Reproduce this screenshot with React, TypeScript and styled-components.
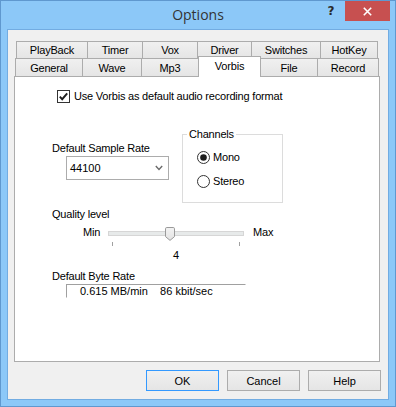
import React from "react";
import styled, { createGlobalStyle } from "styled-components";

const GlobalStyle = createGlobalStyle`
  html, body {
    margin: 0;
    padding: 0;
    width: 396px;
    height: 407px;
    overflow: hidden;
    background: #ffffff;
  }
  * { box-sizing: border-box; }
`;

const UI_FONT = `"Liberation Sans", Arial, sans-serif`;

const Frame = styled.div`
  width: 396px;
  height: 407px;
  border: 1px solid #5f98cf;
  background: #8cc8f8;
  display: flex;
  flex-direction: column;
`;

const TitleBar = styled.div`
  height: 28px;
  display: grid;
  grid-template-columns: 1fr auto 1fr;
  align-items: center;
`;

const TitleText = styled.div`
  grid-column: 2;
  font-family: "Open Sans", "Noto Sans", sans-serif;
  font-size: 14px;
  color: #333333;
  line-height: 28px;
`;

const TitleControls = styled.div`
  grid-column: 3;
  justify-self: end;
  align-self: start;
  display: flex;
  align-items: flex-start;
  margin-right: 5px;
`;

const HelpGlyph = styled.div`
  width: 26px;
  height: 20px;
  display: flex;
  align-items: center;
  justify-content: center;
  font-family: "DejaVu Sans", sans-serif;
  font-weight: bold;
  font-size: 12px;
  color: #2a2a2a;
  padding-right: 2px;
`;

const CloseButton = styled.div`
  width: 45px;
  height: 20px;
  background: #c75050;
  display: flex;
  align-items: center;
  justify-content: center;
`;

const Client = styled.div`
  flex: 1;
  margin: 0 6px 6px 6px;
  border: 1px solid #72ace2;
  background: #f0f0f0;
  display: flex;
  flex-direction: column;
  padding: 11px 8px 8px 6px;
  font-family: ${UI_FONT};
  font-size: 11px;
  color: #000000;
`;

const TabRow = styled.div<{ $offset: number; $h: number }>`
  display: flex;
  align-items: flex-end;
  height: ${(p) => p.$h}px;
  margin-left: ${(p) => p.$offset}px;
`;

const Tab = styled.div<{ $w: number; $h: number; $active?: boolean; $first?: boolean }>`
  width: ${(p) => p.$w}px;
  height: ${(p) => (p.$active ? 21 : p.$h)}px;
  margin-left: ${(p) => (p.$first ? 0 : -1)}px;
  margin-bottom: ${(p) => (p.$active ? -1 : 0)}px;
  border: 1px solid #acacac;
  border-bottom: none;
  background: ${(p) => (p.$active ? "#ffffff" : "linear-gradient(#f0f0f0, #e5e5e5)")};
  display: flex;
  align-items: center;
  justify-content: center;
  padding-bottom: ${(p) => (p.$active ? 3 : 0)}px;
  position: ${(p) => (p.$active ? "relative" : "static")};
  z-index: ${(p) => (p.$active ? 2 : "auto")};
  font-size: 11px;
  letter-spacing: -0.2px;
  white-space: nowrap;
`;

const Panel = styled.div`
  height: 286px;
  border: 1px solid #acacac;
  background: #ffffff;
  display: flex;
  flex-direction: column;
  letter-spacing: -0.2px;
`;

const CheckRow = styled.div`
  display: flex;
  align-items: center;
  gap: 4px;
  margin: 13px 0 0 42px;
  height: 13px;
  line-height: 13px;
`;

const MiddleRow = styled.div`
  display: flex;
  align-items: flex-start;
  margin: 25px 0 0 37px;
`;

const LeftColumn = styled.div`
  width: 130px;
  display: flex;
  flex-direction: column;
  padding-top: 14px;
`;

const Label = styled.div<{ $top?: number; $left?: number }>`
  line-height: 13px;
  height: 13px;
  margin-top: ${(p) => p.$top ?? 0}px;
  margin-left: ${(p) => p.$left ?? 0}px;
  white-space: nowrap;
`;

const Combo = styled.div`
  margin: 1px 0 0 14px;
  width: 103px;
  height: 24px;
  border: 1px solid #acacac;
  background: #ffffff;
  display: flex;
  align-items: center;
  justify-content: space-between;
  padding: 0 5px 0 3px;
  letter-spacing: 0;
`;

const GroupBox = styled.fieldset`
  width: 101px;
  height: 75px;
  margin: 0;
  padding: 0;
  border: 1px solid #dcdcdc;
  min-width: 0;
`;

const GroupLegend = styled.legend`
  margin-left: 4px;
  padding: 0 2px;
  line-height: 13px;
  font-size: 11px;
`;

const RadioList = styled.div`
  display: flex;
  flex-direction: column;
  gap: 11px;
  padding: 10px 0 0 14px;
`;

const OptionRow = styled.div`
  display: flex;
  align-items: center;
  gap: 3px;
  height: 13px;
  line-height: 13px;
`;

const SliderRow = styled.div`
  display: flex;
  align-items: flex-start;
  margin: 5px 0 0 68px;
`;

const EndLabel = styled.div<{ $w: number }>`
  width: ${(p) => p.$w}px;
  line-height: 13px;
  height: 13px;
`;

const SliderColumn = styled.div`
  width: 136px;
  margin: 1px 9px 0 0;
  display: flex;
  flex-direction: column;
`;

const TrackArea = styled.div`
  position: relative;
  height: 14px;
  padding-top: 4px;
`;

const Track = styled.div`
  height: 5px;
  border: 1px solid #d6d6d6;
  background: #e7eaea;
`;

const Thumb = styled.svg`
  position: absolute;
  top: 0;
`;

const TickRow = styled.div`
  display: flex;
  justify-content: space-between;
  padding: 0 4px;
  margin-top: 1px;
  height: 4px;
`;

const Tick = styled.div`
  width: 1px;
  height: 4px;
  background: #a0a0a0;
`;

const ValueLabel = styled.div`
  margin-top: 3px;
  text-align: center;
  line-height: 13px;
  height: 13px;
`;

const RateBox = styled.div`
  margin: 1px 0 0 51px;
  width: 180px;
  height: 14px;
  border-top: 1px solid #a0a0a0;
  border-left: 1px solid #a0a0a0;
  border-right: 1px solid #ffffff;
  border-bottom: 1px solid #ffffff;
  padding-left: 13px;
  line-height: 12px;
  white-space: pre;
  letter-spacing: 0;
`;

const ButtonRow = styled.div`
  display: flex;
  justify-content: flex-end;
  gap: 8px;
  margin: 8px -1px 0 0;
`;

const DialogButton = styled.div<{ $default?: boolean }>`
  width: 73px;
  height: 21px;
  border: 1px solid ${(p) => (p.$default ? "#3399ff" : "#acacac")};
  background: linear-gradient(#f0f0f0, #e5e5e5);
  display: flex;
  align-items: center;
  justify-content: center;
  font-size: 11px;
`;

const row1 = [
  { label: "PlayBack", x: 16 },
  { label: "Timer", x: 87 },
  { label: "Vox", x: 142 },
  { label: "Driver", x: 197 },
  { label: "Switches", x: 251 },
  { label: "HotKey", x: 320 },
];
const row1End = 377;

const row2 = [
  { label: "General", x: 15 },
  { label: "Wave", x: 82 },
  { label: "Mp3", x: 141 },
  { label: "Vorbis", x: 198 },
  { label: "File", x: 260 },
  { label: "Record", x: 317 },
];
const row2End = 378;

const ACTIVE_TAB = "Vorbis";

const quality = { value: 4, min: -1, max: 10 };
const TICK_START = 4;
const TICK_SPAN = 127;
const THUMB_W = 10;

function CheckBoxIcon() {
  return (
    <svg width="13" height="13" viewBox="0 0 13 13">
      <rect x="0.5" y="0.5" width="12" height="12" fill="#ffffff" stroke="#333333" />
      <path d="M2.8 6.6 L5.2 9.2 L10.2 3.4" fill="none" stroke="#1e1e1e" strokeWidth="1.9" />
    </svg>
  );
}

function RadioIcon({ checked }: { checked?: boolean }) {
  return (
    <svg width="13" height="13" viewBox="0 0 13 13">
      <circle cx="6.5" cy="6.5" r="6" fill="#ffffff" stroke="#333333" />
      {checked && <circle cx="6.5" cy="6.5" r="3.3" fill="#1e1e1e" />}
    </svg>
  );
}

function Chevron() {
  return (
    <svg width="8" height="6" viewBox="0 0 8 6">
      <path d="M0.8 1 L4 4.4 L7.2 1" fill="none" stroke="#6a6a6a" strokeWidth="1.4" />
    </svg>
  );
}

function renderRow(tabs: { label: string; x: number }[], end: number, h: number) {
  return tabs.map((t, i) => {
    const next = i + 1 < tabs.length ? tabs[i + 1].x : end;
    return (
      <Tab
        key={t.label}
        $w={next - t.x + 1}
        $h={h}
        $first={i === 0}
        $active={t.label === ACTIVE_TAB}
      >
        {t.label}
      </Tab>
    );
  });
}

export default function App() {
  const ratio = (quality.value - quality.min) / (quality.max - quality.min);
  const thumbLeft = TICK_START + ratio * TICK_SPAN - THUMB_W / 2;

  return (
    <>
      <GlobalStyle />
      <Frame>
        <TitleBar>
          <TitleText>Options</TitleText>
          <TitleControls>
            <HelpGlyph>?</HelpGlyph>
            <CloseButton>
              <svg width="9" height="9" viewBox="0 0 9 9">
                <path d="M0.8 0.8 L8.2 8.2 M8.2 0.8 L0.8 8.2" stroke="#ffffff" strokeWidth="1.6" />
              </svg>
            </CloseButton>
          </TitleControls>
        </TitleBar>
        <Client>
          <TabRow $offset={2} $h={17}>
            {renderRow(row1, row1End, 17)}
          </TabRow>
          <TabRow $offset={1} $h={18}>
            {renderRow(row2, row2End, 18)}
          </TabRow>
          <Panel>
            <CheckRow>
              <CheckBoxIcon />
              <span>Use Vorbis as default audio recording format</span>
            </CheckRow>
            <MiddleRow>
              <LeftColumn>
                <Label>Default Sample Rate</Label>
                <Combo>
                  <span>44100</span>
                  <Chevron />
                </Combo>
              </LeftColumn>
              <GroupBox>
                <GroupLegend>Channels</GroupLegend>
                <RadioList>
                  <OptionRow>
                    <RadioIcon checked />
                    <span>Mono</span>
                  </OptionRow>
                  <OptionRow>
                    <RadioIcon />
                    <span>Stereo</span>
                  </OptionRow>
                </RadioList>
              </GroupBox>
            </MiddleRow>
            <Label $top={5} $left={37}>Quality level</Label>
            <SliderRow>
              <EndLabel $w={25}>Min</EndLabel>
              <SliderColumn>
                <TrackArea>
                  <Track />
                  <Thumb
                    width="10"
                    height="14"
                    viewBox="0 0 10 14"
                    style={{ left: `${thumbLeft}px` }}
                  >
                    <defs>
                      <linearGradient id="thumbFill" x1="0" y1="0" x2="0" y2="1">
                        <stop offset="0" stopColor="#f3f3f3" />
                        <stop offset="1" stopColor="#e3e3e3" />
                      </linearGradient>
                    </defs>
                    <path
                      d="M0.5 1.8 Q0.5 0.5 1.8 0.5 H8.2 Q9.5 0.5 9.5 1.8 V9.6 L5 13.4 L0.5 9.6 Z"
                      fill="url(#thumbFill)"
                      stroke="#9a9a9a"
                    />
                  </Thumb>
                </TrackArea>
                <TickRow>
                  <Tick />
                  <Tick />
                </TickRow>
                <ValueLabel>{quality.value}</ValueLabel>
              </SliderColumn>
              <EndLabel $w={24}>Max</EndLabel>
            </SliderRow>
            <Label $top={8} $left={37}>Default Byte Rate</Label>
            <RateBox>{"0.615 MB/min    86 kbit/sec"}</RateBox>
          </Panel>
          <ButtonRow>
            <DialogButton $default>OK</DialogButton>
            <DialogButton>Cancel</DialogButton>
            <DialogButton>Help</DialogButton>
          </ButtonRow>
        </Client>
      </Frame>
    </>
  );
}
